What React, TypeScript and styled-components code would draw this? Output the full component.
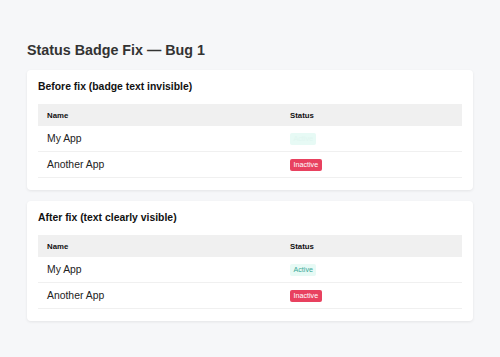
import React from "react";
import styled, { createGlobalStyle } from "styled-components";

const Global = createGlobalStyle`
  html, body { margin: 0; padding: 0; background: #f6f7f9; }
  body { font-family: "Liberation Sans", Arial, sans-serif; }
`;

const Page = styled.div`
  padding: 40px 27px 20px;
`;

const Title = styled.h1`
  margin: 0 0 10px;
  font-size: 14.3px;
  line-height: 20px;
  font-weight: 700;
  color: #333;
`;

const Card = styled.section`
  background: #fff;
  border-radius: 4px;
  box-shadow: 0 1px 3px rgba(0, 0, 0, 0.08);
  padding: 10px 11px 12px;
  & + & { margin-top: 11px; }
`;

const CardTitle = styled.h2`
  margin: 0 0 10px;
  font-size: 10.4px;
  line-height: 14px;
  font-weight: 700;
  color: #111;
`;

const Table = styled.table`
  width: 100%;
  border-collapse: collapse;
`;

const Th = styled.th<{ $w?: number }>`
  background: #f0f0f0;
  text-align: left;
  font-size: 7.8px;
  font-weight: 700;
  color: #111;
  height: 22px;
  padding: 0 9px;
  ${(p) => (p.$w ? `width: ${p.$w}px;` : "")}
`;

const Td = styled.td`
  height: 25px;
  padding: 0 9px;
  font-size: 10.4px;
  color: #222;
  border-bottom: 1px solid #f0f0f0;
`;

const Badge = styled.span<{ $kind: "active" | "inactive" | "ghost" }>`
  display: inline-block;
  font-size: 7.15px;
  line-height: 8px;
  padding: 2px 3.5px;
  border-radius: 2px;
  background: ${(p) => (p.$kind === "inactive" ? "#e8415f" : "#e7faf5")};
  color: ${(p) =>
    p.$kind === "inactive" ? "#fff" : p.$kind === "active" ? "#3aa898" : "#e0f6f0"};
`;

const rows = [
  { name: "My App", status: "Active" },
  { name: "Another App", status: "Inactive" },
];

function StatusTable({ broken }: { broken: boolean }) {
  return (
    <Table>
      <thead>
        <tr>
          <Th $w={225}>Name</Th>
          <Th>Status</Th>
        </tr>
      </thead>
      <tbody>
        {rows.map((r) => (
          <tr key={r.name}>
            <Td>{r.name}</Td>
            <Td>
              <Badge
                $kind={
                  r.status === "Inactive" ? "inactive" : broken ? "ghost" : "active"
                }
              >
                {r.status}
              </Badge>
            </Td>
          </tr>
        ))}
      </tbody>
    </Table>
  );
}

export default function App() {
  return (
    <>
      <Global />
      <Page>
        <Title>Status Badge Fix — Bug 1</Title>
        <Card>
          <CardTitle>Before fix (badge text invisible)</CardTitle>
          <StatusTable broken />
        </Card>
        <Card>
          <CardTitle>After fix (text clearly visible)</CardTitle>
          <StatusTable broken={false} />
        </Card>
      </Page>
    </>
  );
}
